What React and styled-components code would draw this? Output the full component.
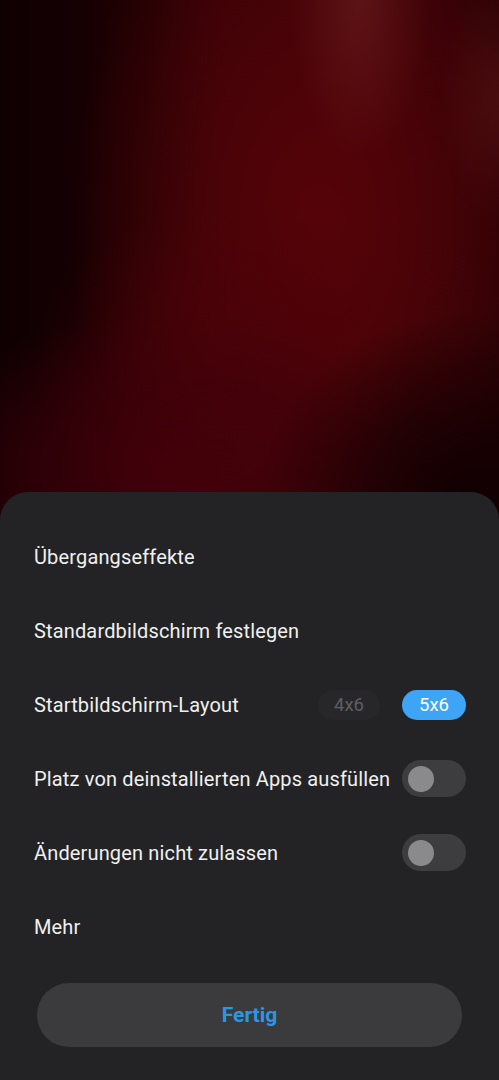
import React, { useState } from "react";
import styled, { createGlobalStyle } from "styled-components";

const Global = createGlobalStyle`
  html, body { margin: 0; padding: 0; background: #0e0002; }
  * { box-sizing: border-box; }
`;

const Screen = styled.div`
  width: 499px;
  height: 1080px;
  display: flex;
  flex-direction: column;
  font-family: Roboto, "Noto Sans", sans-serif;
  overflow: hidden;
  background: #120002;
`;

const Wallpaper = styled.div`
  flex: 0 0 520px;
  margin-bottom: -28px;
  background:
    radial-gradient(ellipse 70px 160px at 360px 0px, rgba(120, 40, 40, 0.45), rgba(120, 40, 40, 0) 100%),
    radial-gradient(ellipse 60px 120px at 499px 100px, rgba(100, 25, 25, 0.45), rgba(100, 25, 25, 0) 100%),
    radial-gradient(ellipse 210px 190px at 470px 500px, rgba(16, 0, 2, 1), rgba(16, 0, 2, 0.6) 50%, rgba(16, 0, 2, 0) 100%),
    radial-gradient(ellipse 260px 160px at 170px 470px, rgba(68, 0, 10, 0.95), rgba(64, 0, 10, 0.6) 50%, rgba(64, 0, 10, 0) 100%),
    radial-gradient(ellipse 200px 160px at 230px 360px, rgba(76, 1, 9, 0.8), rgba(76, 1, 9, 0) 100%),
    radial-gradient(ellipse 250px 380px at 320px 220px, rgba(86, 3, 8, 1), rgba(80, 3, 8, 0.75) 40%, rgba(60, 2, 6, 0) 100%),
    linear-gradient(90deg, #0f0002 0%, #150002 15%, #230103 30%, #380206 45%, #400307 70%, #280104 100%);
`;

const Sheet = styled.div`
  position: relative;
  flex: 1;
  background: #232325;
  border-radius: 28px 28px 0 0;
  padding: 28px 0 0;
  display: flex;
  flex-direction: column;
`;

const Row = styled.div`
  height: 74px;
  display: flex;
  align-items: center;
  justify-content: space-between;
  padding: 0 33px 0 34px;
`;

const Label = styled.span`
  color: #f0f0f0;
  font-size: 20px;
  letter-spacing: 0.15px;
`;

const Chips = styled.div`
  display: flex;
  gap: 22px;
`;

const Chip = styled.div`
  width: ${(p) => (p.$active ? "64px" : "62px")};
  height: 30px;
  border-radius: 15px;
  display: flex;
  align-items: center;
  justify-content: center;
  font-size: 18.5px;
  background: ${(p) => (p.$active ? "#3ea5f6" : "#27272a")};
  color: ${(p) => (p.$active ? "#ffffff" : "#5f5f62")};
`;

const Toggle = styled.div`
  width: 64px;
  height: 37px;
  margin-top: -1px;
  border-radius: 18.5px;
  background: #3d3d3f;
  display: flex;
  align-items: center;
  padding-left: 6px;
`;

const Knob = styled.div`
  width: 26px;
  height: 26px;
  border-radius: 50%;
  background: #8a8a8c;
`;

const Footer = styled.div`
  padding: 19px 37px 0;
`;

const Done = styled.button`
  width: 100%;
  height: 64px;
  border: none;
  border-radius: 32px;
  background: #3b3b3d;
  color: #2b97e3;
  font-family: Roboto, "Noto Sans", sans-serif;
  font-size: 21px;
  font-weight: 700;
`;

export default function App() {
  const [layout, setLayout] = useState("5x6");
  return (
    <Screen>
      <Global />
      <Wallpaper />
      <Sheet>
        <Row><Label>Übergangseffekte</Label></Row>
        <Row><Label>Standardbildschirm festlegen</Label></Row>
        <Row>
          <Label>Startbildschirm-Layout</Label>
          <Chips>
            {["4x6", "5x6"].map((l) => (
              <Chip key={l} $active={layout === l} onClick={() => setLayout(l)}>{l}</Chip>
            ))}
          </Chips>
        </Row>
        <Row>
          <Label>Platz von deinstallierten Apps ausfüllen</Label>
          <Toggle><Knob /></Toggle>
        </Row>
        <Row>
          <Label>Änderungen nicht zulassen</Label>
          <Toggle><Knob /></Toggle>
        </Row>
        <Row><Label>Mehr</Label></Row>
        <Footer><Done>Fertig</Done></Footer>
      </Sheet>
    </Screen>
  );
}
